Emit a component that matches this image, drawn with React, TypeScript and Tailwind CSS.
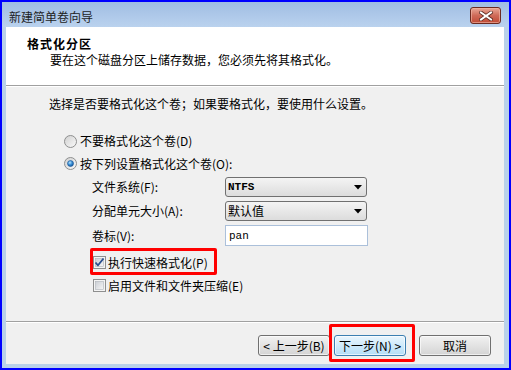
import React from "react";

function Radio({ checked }: { checked?: boolean }) {
  return (
    <svg width="13" height="13" viewBox="0 0 13 13" className="shrink-0">
      <defs>
        <linearGradient id={checked ? "rg1" : "rg0"} x1="0" y1="0" x2="1" y2="1">
          <stop offset="0" stopColor="#cfcfcf" />
          <stop offset="1" stopColor="#fbfbfb" />
        </linearGradient>
        <radialGradient id="dot" cx="0.4" cy="0.35" r="0.7">
          <stop offset="0" stopColor="#b9e4fc" />
          <stop offset="0.5" stopColor="#3a8fd6" />
          <stop offset="1" stopColor="#0d4f96" />
        </radialGradient>
      </defs>
      <circle cx="6.5" cy="6.5" r="6" fill={`url(#${checked ? "rg1" : "rg0"})`} stroke="#8e8f8f" strokeWidth="1" />
      {checked && <circle cx="6.5" cy="6.5" r="3" fill="url(#dot)" stroke="#1d5796" strokeWidth="0.6" />}
    </svg>
  );
}

function Check({ checked }: { checked?: boolean }) {
  return (
    <svg width="13" height="13" viewBox="0 0 13 13" className="shrink-0">
      <defs>
        <linearGradient id="cbg" x1="0" y1="0" x2="1" y2="1">
          <stop offset="0" stopColor="#cbcfd5" />
          <stop offset="1" stopColor="#f6f6f6" />
        </linearGradient>
      </defs>
      <rect x="0.5" y="0.5" width="12" height="12" fill="#f4f4f4" stroke="#8e8f8f" />
      <rect x="2.5" y="2.5" width="8" height="8" fill="url(#cbg)" stroke="#aeb3b9" strokeWidth="0.6" />
      {checked && (
        <path d="M2.5 6.5 L5 9.3 L10.5 2.5" fill="none" stroke="#2a4f8e" strokeWidth="1.8" strokeLinejoin="round" />
      )}
    </svg>
  );
}

function Select({ value, mono }: { value: string; mono?: boolean }) {
  return (
    <div className="w-[142px] h-[20px] rounded-[3px] border border-[#707070] bg-gradient-to-b from-[#f4f4f4] to-[#dcdcdc] flex items-center justify-between pl-[2px] pr-[4px]">
      <span className={mono ? "font-['Liberation_Mono',monospace] text-[11px] font-bold" : ""}>{value}</span>
      <svg width="8" height="5" viewBox="0 0 8 5">
        <path d="M0 0 H8 L4 4.5 Z" fill="#000" />
      </svg>
    </div>
  );
}

function Button({ children, hot }: { children: React.ReactNode; hot?: boolean }) {
  return (
    <div
      className={
        "w-[72px] h-[21px] rounded-[3px] border flex items-center justify-center " +
        (hot
          ? "border-[#3c7fb1] bg-gradient-to-b from-[#eaf6fd] to-[#b4def7] shadow-[inset_0_0_0_1px_#ffffffa0]"
          : "border-[#707070] bg-gradient-to-b from-[#f2f2f2] to-[#d4d4d4] shadow-[inset_0_0_0_1px_#ffffffa0]")
      }
    >
      {children}
    </div>
  );
}

export default function App() {
  return (
    <div className="w-[511px] h-[370px] border-2 border-[#0000ff] bg-[#b9d1ea] flex flex-col font-['Noto_Sans_CJK_SC',sans-serif] text-[12px] leading-[14px] text-black">
      {/* title bar */}
      <div className="h-[25px] shrink-0 flex items-start justify-between bg-gradient-to-b from-[#a0bde3] to-[#bad2ee]">
        <div className="pl-[7px] pt-[8px] text-[#1e1e1e]">新建简单卷向导</div>
        <div className="mt-[5px] mr-[8px] w-[31px] h-[17px] rounded-[3px] border border-[#6b2a20] bg-gradient-to-b from-[#e8a898] via-[#cf6a58] to-[#c04a35] flex items-center justify-center shadow-[inset_0_0_0_1px_#f0b8a8a0]">
          <svg width="14" height="10" viewBox="0 0 14 10">
            <path d="M2 1.5 L12 8.5 M12 1.5 L2 8.5" stroke="#5a2a22" strokeWidth="3.6" strokeLinecap="square" />
            <path d="M2 1.5 L12 8.5 M12 1.5 L2 8.5" stroke="#ffffff" strokeWidth="2" strokeLinecap="square" />
          </svg>
        </div>
      </div>

      {/* client */}
      <div className="flex-1 ml-[4px] mr-[5px] mb-[4px] flex flex-col bg-[#f0f0f0]">
        <div className="h-[58px] shrink-0 bg-white pt-[10px] pl-[21px]">
          <div className="font-bold tracking-[1px]">格式化分区</div>
          <div className="mt-[2px] pl-[23px]">要在这个磁盘分区上储存数据，您必须先将其格式化。</div>
        </div>
        <div className="h-px bg-[#a0a0a0]" />
        <div className="h-px bg-white" />

        <div className="flex-1 flex flex-col pt-[10px]">
          <div className="pl-[43px]">选择是否要格式化这个卷；如果要格式化，要使用什么设置。</div>

          <div className="mt-[19px] h-[22px] pl-[58px] flex items-center gap-[3px]">
            <Radio />
            <span>不要格式化这个卷(D)</span>
          </div>
          <div className="h-[23px] pl-[58px] flex items-center gap-[3px]">
            <Radio checked />
            <span>按下列设置格式化这个卷(O):</span>
          </div>

          <div className="mt-[2px] pl-[86px] flex flex-col gap-[4px]">
            <div className="h-[20px] flex items-center">
              <span className="w-[133px]">文件系统(F):</span>
              <Select value="NTFS" mono />
            </div>
            <div className="h-[20px] flex items-center">
              <span className="w-[133px]">分配单元大小(A):</span>
              <Select value="默认值" />
            </div>
            <div className="h-[21px] flex items-center">
              <span className="w-[133px]">卷标(V):</span>
              <div className="w-[143px] h-[21px] border border-[#abc0da] bg-white flex items-center pl-[3px] font-['Liberation_Mono',monospace] text-[11px]">
                pan
              </div>
            </div>
          </div>

          <div className="mt-[5px] pl-[87px] flex flex-col">
            <div className="relative h-[23px] w-fit flex items-center gap-[2px]">
              <Check checked />
              <span>执行快速格式化(P)</span>
              <div className="absolute left-[-3px] top-[-3px] w-[127px] h-[27px] border-[3px] border-[#ff0000] rounded-[2px]" />
            </div>
            <div className="h-[23px] flex items-center gap-[2px]">
              <Check />
              <span>启用文件和文件夹压缩(E)</span>
            </div>
          </div>
        </div>

        <div className="h-px bg-[#a0a0a0]" />
        <div className="h-px bg-white" />
        <div className="h-[41px] shrink-0 flex items-start pt-[12px] pl-[252px]">
          <Button>&lt; 上一步(B)</Button>
          <div className="relative ml-[4px]">
            <Button hot>下一步(N) &gt;</Button>
            <div className="absolute left-[-5px] top-[-11px] w-[86px] h-[38px] border-[3px] border-[#ff0000] rounded-[2px]" />
          </div>
          <div className="ml-[13px]">
            <Button>取消</Button>
          </div>
        </div>
      </div>
    </div>
  );
}
